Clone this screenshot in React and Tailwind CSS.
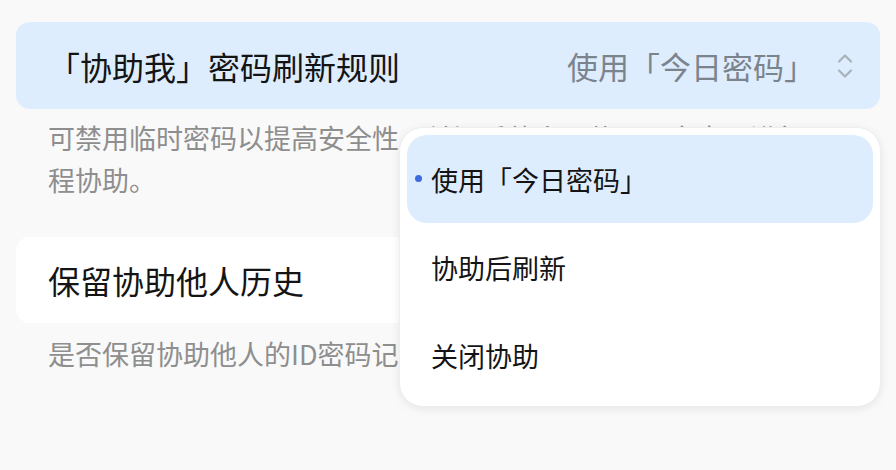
import React from "react";

const font = { fontFamily: '"Noto Sans CJK SC", "Noto Sans", sans-serif' };

function Chevrons() {
  return (
    <svg width="16" height="26" viewBox="0 0 16 26" fill="none" className="text-[#a9b1b9]">
      <path d="M2 8.5 L8 2.5 L14 8.5" stroke="currentColor" strokeWidth="2.2" strokeLinecap="round" strokeLinejoin="round" />
      <path d="M2 17.5 L8 23.5 L14 17.5" stroke="currentColor" strokeWidth="2.2" strokeLinecap="round" strokeLinejoin="round" />
    </svg>
  );
}

const options = ["使用「今日密码」", "协助后刷新", "关闭协助"];

export default function App() {
  return (
    <div className="relative w-[896px] h-[470px] bg-[#f9f9f9] overflow-hidden" style={font}>
      <div className="px-4 pt-[22px]">
        <div className="h-[87px] rounded-[14px] bg-[#deedfe] flex items-center justify-between pl-8 pr-[27px]">
          <span className="text-[32px] leading-none text-[#141414]">「协助我」密码刷新规则</span>
          <div className="flex items-center gap-[22px]">
            <span className="text-[31px] leading-none text-[#7b848d]">使用「今日密码」</span>
            <Chevrons />
          </div>
        </div>
        <p className="mt-2 px-8 text-[27px] leading-[42px] text-[#8e8e8e]">
          可禁用临时密码以提高安全性，关闭后他人需使用固定密码进行远程协助。
        </p>
        <div className="mt-[36px] h-[86px] rounded-[14px] bg-white flex items-center px-8">
          <span className="text-[32px] leading-none text-[#141414]">保留协助他人历史</span>
        </div>
        <p className="mt-[10px] px-8 text-[27px] leading-[42px] text-[#8e8e8e]">
          是否保留协助他人的ID密码记录。
        </p>
      </div>

      <div className="absolute left-[399px] top-[127px] w-[482px] rounded-[24px] bg-white p-[7px] shadow-[0_2px_10px_rgba(0,0,0,0.08)] border border-[#eeeeee]">
        {options.map((o, i) => (
          <div
            key={o}
            className={
              i === 0
                ? "relative h-[88px] rounded-[20px] bg-[#deedfe] flex items-center pl-[24px]"
                : "relative h-[88px] rounded-[20px] flex items-center pl-[24px]"
            }
          >
            {i === 0 && (
              <span className="absolute left-[8px] top-[40px] w-[7px] h-[7px] rounded-full bg-[#3d6be0]" />
            )}
            <span className="text-[27px] leading-none text-[#141414]">{o}</span>
          </div>
        ))}
      </div>
    </div>
  );
}
